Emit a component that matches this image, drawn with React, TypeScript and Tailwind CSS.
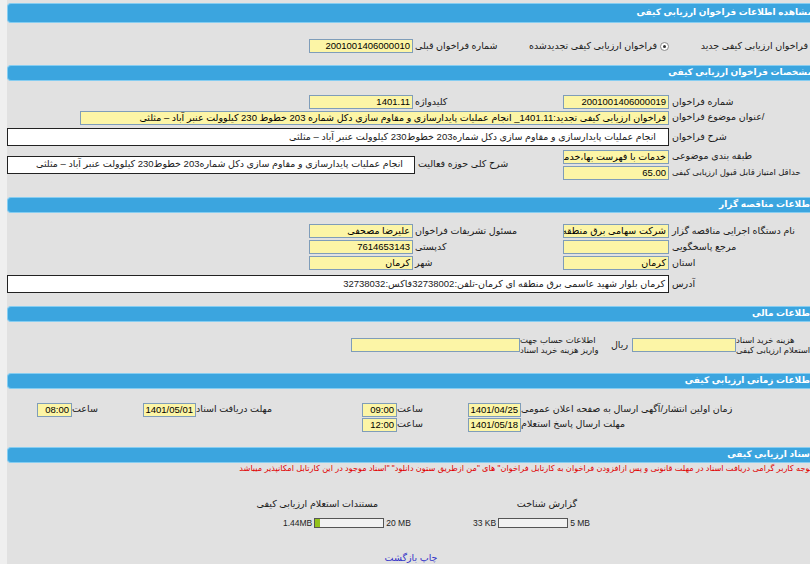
import React from "react";

function Header({ title, tall }: { title: string; tall?: boolean }) {
  return (
    <div
      className={`flex items-center rounded-l-[4px] border border-r-0 border-[#86cdf1] bg-[#3ba5df] pr-[2px] text-[9px] font-bold whitespace-nowrap text-white ${
        tall ? "h-[20px]" : "h-[16px]"
      }`}
    >
      {title}
    </div>
  );
}

function Field({ w, value = "" }: { w: string; value?: string }) {
  return (
    <div
      className={`h-[14px] shrink-0 overflow-hidden border border-[#7f9db9] bg-[#fcf5a6] px-[2px] text-right text-[9.5px] leading-[12px] whitespace-nowrap text-black ${w}`}
    >
      {value}
    </div>
  );
}

function Row4({ l1, v1, l2, v2 }: { l1: string; v1: string; l2: string; v2: string }) {
  return (
    <div className="flex h-[16px] items-center">
      <div className="w-[146px] shrink-0 pl-[3px] text-left whitespace-nowrap">{l1}</div>
      <Field w="w-[106px]" value={v1} />
      <div className="w-[150px] shrink-0 pl-[2px] text-left whitespace-nowrap">{l2}</div>
      <Field w="w-[104px]" value={v2} />
    </div>
  );
}

function Bar({ left, right, fill }: { left: string; right: string; fill?: boolean }) {
  return (
    <div className="flex h-[12px] items-center text-[8.5px] whitespace-nowrap text-[#222]">
      <span>{left}</span>
      <div className="mx-[2px] flex h-[10px] w-[70px] shrink-0 border border-[#555] bg-[#f2f2f2]">
        {fill && <div className="h-full w-[5px] bg-[#93c21c]" />}
      </div>
      <span>{right}</span>
    </div>
  );
}

export default function App() {
  return (
    <div className="h-[564px] w-[810px] overflow-hidden bg-[#efefef] font-['Liberation_Sans','DejaVu_Sans',sans-serif] text-[9.5px] text-[#1a1a1a]">
      <div dir="rtl" className="ml-[7px] w-[808px] bg-[#e1e1e1] pt-[3px] pb-[20px]">
        {/* مشاهده */}
        <Header title="مشاهده اطلاعات فراخوان ارزیابی کیفی" tall />
        <div className="mt-[15px] mb-[11px] flex h-[16px] items-center">
          <div className="w-[146px] shrink-0 pr-[7px] whitespace-nowrap">فراخوان ارزیابی کیفی جدید</div>
          <div className="flex w-[256px] shrink-0 items-center justify-between">
            <div className="flex items-center gap-[3px] whitespace-nowrap">
              <span className="flex h-[9px] w-[9px] items-center justify-center rounded-full border border-[#8a8a8a] bg-white">
                <span className="h-[3px] w-[3px] rounded-full bg-[#333]" />
              </span>
              فراخوان ارزیابی کیفی تجدیدشده
            </div>
            <div className="pl-[2px] whitespace-nowrap">شماره فراخوان قبلی</div>
          </div>
          <Field w="w-[104px]" value="2001001406000010" />
        </div>

        {/* مشخصات */}
        <Header title="مشخصات فراخوان ارزیابی کیفی" />
        <div className="mt-[13px]">
          <Row4 l1="شماره فراخوان" v1="2001001406000019" l2="کلیدواژه" v2="1401.11" />
          <div className="flex h-[15px] items-center">
            <div className="w-[146px] shrink-0 pl-[3px] text-left whitespace-nowrap">/عنوان موضوع فراخوان</div>
            <Field
              w="w-[589px]"
              value="فراخوان ارزیابی کیفی تجدید:1401.11_ انجام عملیات پایدارسازی و مقاوم سازی دکل شماره 203 خطوط 230 کیلوولت عنبر آباد – مثلثی"
            />
          </div>
          <div className="mt-[3px] flex h-[18px] items-center">
            <div className="w-[146px] shrink-0 pl-[3px] text-left whitespace-nowrap">شرح فراخوان</div>
            <div className="flex h-[18px] flex-1 items-center border border-[#222] bg-white pr-[12px] whitespace-nowrap">
              انجام عملیات پایدارسازی و مقاوم سازی دکل شماره203 خطوط230 کیلوولت عنبر آباد – مثلثی
            </div>
          </div>
          <div className="mt-[2px] flex h-[33px] items-center">
            <div className="flex flex-col">
              <div className="flex h-[16px] items-center">
                <div className="w-[146px] shrink-0 pl-[3px] text-left whitespace-nowrap">طبقه بندی موضوعی</div>
                <Field w="w-[106px]" value="خدمات با فهرست بها،خدمات" />
              </div>
              <div className="flex h-[16px] items-center">
                <div className="w-[146px] shrink-0 pl-[3px] text-left text-[8.5px] whitespace-nowrap">حداقل امتیاز قابل قبول ارزیابی کیفی</div>
                <Field w="w-[106px]" value="65.00" />
              </div>
            </div>
            <div className="w-[148px] shrink-0 pl-[3px] text-left whitespace-nowrap">شرح کلی حوزه فعالیت</div>
            <div className="flex h-[18px] flex-1 items-center border border-[#222] bg-white pr-[11px] whitespace-nowrap">
              انجام عملیات پایدارسازی و مقاوم سازی دکل شماره203 خطوط230 کیلوولت عنبر آباد – مثلثی
            </div>
          </div>
        </div>

        {/* مناقصه گزار */}
        <div className="mt-[16px]">
          <Header title="اطلاعات مناقصه گزار" />
        </div>
        <div className="mt-[10px]">
          <Row4 l1="نام دستگاه اجرایی مناقصه گزار" v1="شرکت سهامی برق منطقه" l2="مسئول تشریفات فراخوان" v2="علیرضا مصحفی" />
          <Row4 l1="مرجع پاسخگویی" v1="" l2="کدپستی" v2="7614653143" />
          <Row4 l1="استان" v1="کرمان" l2="شهر" v2="کرمان" />
          <div className="mt-[4px] flex h-[18px] items-center">
            <div className="w-[146px] shrink-0 pl-[3px] text-left whitespace-nowrap">آدرس</div>
            <div className="flex h-[18px] flex-1 items-center border border-[#222] bg-white pr-[3px] whitespace-nowrap">
              کرمان بلوار شهید عاسمی برق منطقه ای کرمان-تلفن:32738002فاکس:32738032
            </div>
          </div>
        </div>

        {/* مالی */}
        <div className="mt-[13px]">
          <Header title="اطلاعات مالی" />
        </div>
        <div className="mt-[13px] flex h-[20px] items-center">
          <div className="w-[79px] shrink-0 text-left text-[8.5px] leading-[10px] whitespace-nowrap">
            هزینه خرید اسناد
            <br />
            استعلام ارزیابی کیفی
          </div>
          <Field w="w-[104px]" />
          <div className="w-[20px] shrink-0 pr-[4px] whitespace-nowrap">ریال</div>
          <div className="w-[92px] shrink-0 text-left text-[8.5px] leading-[10px] whitespace-nowrap">
            اطلاعات حساب جهت
            <br />
            واریز هزینه خرید اسناد
          </div>
          <Field w="w-[169px]" />
        </div>

        {/* زمانی */}
        <div className="mt-[18px]">
          <Header title="اطلاعات زمانی ارزیابی کیفی" />
        </div>
        <div className="mt-[13px]">
          <div className="flex h-[15px] items-center">
            <div className="w-[294px] shrink-0 text-left whitespace-nowrap">زمان اولین انتشار/آگهی ارسال به صفحه اعلان عمومی</div>
            <Field w="w-[53px]" value="1401/04/25" />
            <div className="w-[71px] shrink-0 text-left">ساعت</div>
            <Field w="w-[35px]" value="09:00" />
            <div className="w-[166px] shrink-0 text-left whitespace-nowrap">مهلت دریافت اسناد</div>
            <Field w="w-[53px]" value="1401/05/01" />
            <div className="w-[71px] shrink-0 text-left">ساعت</div>
            <Field w="w-[35px]" value="08:00" />
          </div>
          <div className="flex h-[15px] items-center">
            <div className="w-[294px] shrink-0 text-left whitespace-nowrap">مهلت ارسال پاسخ استعلام</div>
            <Field w="w-[53px]" value="1401/05/18" />
            <div className="w-[71px] shrink-0 text-left">ساعت</div>
            <Field w="w-[35px]" value="12:00" />
          </div>
        </div>

        {/* اسناد */}
        <div className="mt-[15px]">
          <Header title="اسناد ارزیابی کیفی" />
        </div>
        <div className="h-[12px] pr-[3px] text-[8.2px] leading-[12px] whitespace-nowrap text-[#e00000]">
          توجه کاربر گرامی دریافت اسناد در مهلت قانونی و پس ازافزودن فراخوان به کارتابل فراخوان" های "من ازطریق ستون دانلود" "اسناد موجود در این کارتابل امکانپذیر میباشد
        </div>
        <div dir="ltr" className="mt-[22px] flex pl-[276px]">
          <div className="flex w-[125px] flex-col">
            <div dir="rtl" className="ml-[17px] h-[14px] w-[78px] text-right leading-[14px] whitespace-nowrap">
              مستندات استعلام ارزیابی کیفی
            </div>
            <div className="mt-[6px]">
              <Bar left="1.44MB" right="20 MB" fill />
            </div>
          </div>
          <div className="ml-[65px] flex w-[115px] flex-col">
            <div dir="rtl" className="ml-[67px] h-[14px] w-[37px] text-right leading-[14px] whitespace-nowrap">
              گزارش شناخت
            </div>
            <div className="mt-[6px]">
              <Bar left="33 KB" right="5 MB" />
            </div>
          </div>
        </div>
        <div className="mt-[22px] h-[14px] text-center leading-[14px] text-[#3535c8]">چاپ بازگشت</div>
      </div>
    </div>
  );
}
